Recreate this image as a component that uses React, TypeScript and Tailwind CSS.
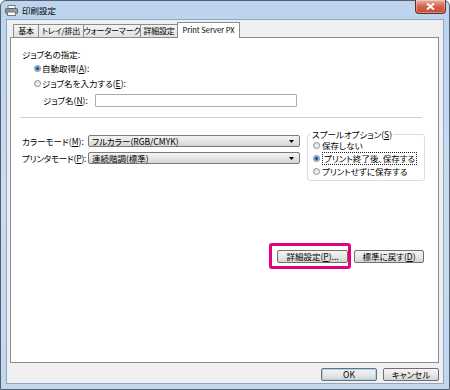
import React from "react";

function Radio({ checked }: { checked?: boolean }) {
  return (
    <span className="flex h-[7px] w-[7px] shrink-0 items-center justify-center rounded-full border border-[#8a8a8a] bg-gradient-to-br from-[#d8d8d8] to-[#ffffff]">
      {checked && <span className="h-[3px] w-[3px] rounded-full bg-[#1d4f9c] shadow-[0_0_1px_1px_#6aa0e0]" />}
    </span>
  );
}

function Btn({ children, className = "" }: { children: React.ReactNode; className?: string }) {
  return (
    <div
      className={
        "flex h-[13px] items-center justify-center whitespace-nowrap rounded-[2px] border border-[#707070] bg-gradient-to-b from-[#f4f4f4] via-[#e8e8e8] to-[#d3d3d3] text-[8.5px] leading-none " +
        className
      }
    >
      {children}
    </div>
  );
}

function Select({ text }: { text: string }) {
  return (
    <div className="flex h-[12px] w-[212px] items-center justify-between whitespace-nowrap rounded-[2px] border border-[#7a7a7a] bg-gradient-to-b from-[#f3f3f3] via-[#e6e6e6] to-[#d6d6d6] pl-[3px] pr-[5px] text-[8.5px] leading-none">
      <span>{text}</span>
      <svg width="5" height="3" viewBox="0 0 5 3">
        <path d="M0 0H5L2.5 3Z" fill="#000" />
      </svg>
    </div>
  );
}

function Tab({ label, w, first, active }: { label: string; w: string; first?: boolean; active?: boolean }) {
  if (active) {
    return (
      <div
        className={`relative z-10 -mb-px -ml-px flex h-[16px] items-center justify-center whitespace-nowrap border border-b-0 border-[#898c95] bg-white pb-[1px] text-[7.5px] leading-none ${w}`}
      >
        {label}
      </div>
    );
  }
  return (
    <div
      className={`flex h-[13px] items-center justify-center whitespace-nowrap border border-b-0 border-[#898c95] bg-gradient-to-b from-[#f4f4f4] to-[#e2e2e2] text-[8px] tracking-[-0.2px] leading-none ${first ? "" : "-ml-px"} ${w}`}
    >
      {label}
    </div>
  );
}

export default function App() {
  return (
    <div className="h-[390px] w-[450px] whitespace-nowrap bg-white text-black [font-family:'Noto_Sans_CJK_JP','Noto_Sans',sans-serif] [font-feature-settings:'palt']">
      <div className="flex h-[390px] w-[450px] flex-col rounded-t-[6px] border border-[#55606e] bg-gradient-to-b from-[#bcd4ee] via-[#c9dcf1] to-[#c2d7ee]">
        {/* Title bar */}
        <div className="flex h-[18px] shrink-0 items-start justify-between pl-[4px] pr-[3px]">
          <div className="mt-[4px] flex items-center gap-[4px]">
            <svg width="13" height="11" viewBox="0 0 13 11">
              <rect x="3" y="0.5" width="7" height="4" fill="#fff" stroke="#7a7a7a" />
              <rect x="0.5" y="3.5" width="12" height="5" rx="1" fill="#8d96a0" stroke="#5d6670" />
              <rect x="2.5" y="7" width="8" height="3.5" fill="#fff" stroke="#7a7a7a" />
              <rect x="9.5" y="5" width="1.5" height="1" fill="#7fe07f" />
            </svg>
            <span className="text-[8.5px] leading-none">印刷設定</span>
          </div>
          <div className="-mt-px flex h-[14px] w-[31px] items-center justify-center rounded-b-[4px] border border-t-0 border-[#6b2a22] bg-gradient-to-b from-[#eab0a2] via-[#d2634f] to-[#c24a36] shadow-[inset_0_0_0_1px_rgba(255,255,255,0.35)]">
            <svg width="9" height="7" viewBox="0 0 9 7">
              <path d="M1 0.5L8 6.5M8 0.5L1 6.5" stroke="#fff" strokeWidth="2" />
            </svg>
          </div>
        </div>

        {/* Client area */}
        <div className="mx-[5px] mb-[5px] flex flex-1 flex-col border border-[#8ea6c4] bg-[#f0f0f0]">
          {/* Tabs */}
          <div className="flex h-[17px] shrink-0 items-end pl-[6px]">
            <Tab label="基本" w="w-[26px]" first />
            <Tab label="トレイ/排出" w="w-[46px]" />
            <Tab label="ウォーターマーク" w="w-[58px]" />
            <Tab label="詳細設定" w="w-[38px]" />
            <Tab label="Print Server PX" w="w-[63px]" active />
          </div>

          {/* Panel */}
          <div className="ml-[3px] mr-[4px] flex h-[326px] shrink-0 flex-col border border-[#898c95] bg-white pl-[11px] pt-[10px] text-[8.5px] leading-none">
            <div className="flex h-[12px] items-center">ジョブ名の指定:</div>
            <div className="mt-[1px] flex h-[14px] items-center gap-[1px] pl-[12px]">
              <Radio checked />
              <span>
                自動取得(<u>A</u>):
              </span>
            </div>
            <div className="mt-[1px] flex h-[14px] items-center gap-[1px] pl-[12px]">
              <Radio />
              <span>
                ジョブ名を入力する(<u>E</u>):
              </span>
            </div>
            <div className="mt-[4px] flex h-[13px] items-center pl-[21px]">
              <span className="w-[52px]">
                ジョブ名(<u>N</u>):
              </span>
              <div className="h-[13px] w-[202px] rounded-[1px] border border-[#abadb3] bg-white" />
            </div>
            <div className="-ml-[2px] mt-[10px] h-px w-[402px] bg-[#cfcfcf]" />

            {/* Modes + spool */}
            <div className="mt-[12px] flex items-start">
              <div className="flex flex-col pt-[5px]">
                <div className="flex h-[12px] items-center">
                  <span className="w-[66px] shrink-0">
                    カラーモード(<u>M</u>):
                  </span>
                  <Select text="フルカラー(RGB/CMYK)" />
                </div>
                <div className="mt-[5px] flex h-[12px] items-center">
                  <span className="w-[66px] shrink-0 tracking-[-0.2px]">
                    プリンタモード(<u>P</u>):
                  </span>
                  <Select text="連続階調(標準)" />
                </div>
              </div>
              <fieldset className="ml-[7px] w-[118px] rounded-[3px] border border-[#d5dfe5] pb-[2px] pl-[5px]">
                <legend className="ml-[-2px] px-[1px] text-[8.5px] leading-[9px]">
                  スプールオプション(<u>S</u>)
                </legend>
                <div className="flex h-[13px] items-center gap-[2px]">
                  <Radio />
                  <span>保存しない</span>
                </div>
                <div className="flex h-[13px] items-center gap-[2px]">
                  <Radio checked />
                  <span className="border border-dotted border-[#222] px-[1px] py-[1px]">プリント終了後、保存する</span>
                </div>
                <div className="flex h-[13px] items-center gap-[2px]">
                  <Radio />
                  <span>プリントせずに保存する</span>
                </div>
              </fieldset>
            </div>

            {/* Buttons */}
            <div className="mt-[69px] flex justify-end gap-[6px] pr-[14px]">
              <div className="relative">
                <Btn className="w-[71px]">詳細設定(<u>P</u>)...</Btn>
                <div className="absolute -bottom-[6px] -left-[8px] -right-[3px] -top-[7px] rounded-[3px] border-[3px] border-[#e5007f]" />
              </div>
              <Btn className="w-[70px]">
                標準に戻す(<u>D</u>)
              </Btn>
            </div>
          </div>

          {/* Bottom buttons */}
          <div className="flex flex-1 items-start justify-end gap-[6px] pr-[4px] pt-[5px]">
            <Btn className="w-[56px] border-[#3c7fb1] shadow-[inset_0_0_0_1px_#9fd4f4]">OK</Btn>
            <Btn className="w-[56px]">キャンセル</Btn>
          </div>
        </div>
      </div>
    </div>
  );
}
